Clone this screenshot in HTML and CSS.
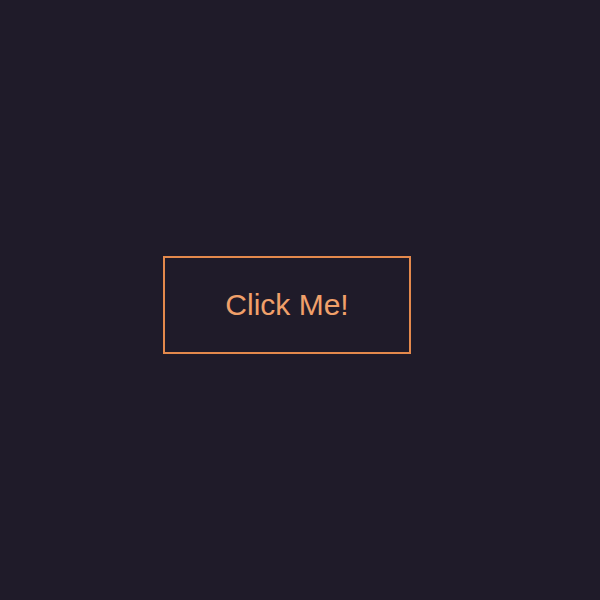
FILE: index.html
```html
<!DOCTYPE html>
<html>
<head>
<meta charset="utf-8">
<link rel="stylesheet" href="styles.css">
</head>
<body>
<main class="stage">
  <button class="btn">Click Me!</button>
</main>
</body>
</html>
```
FILE: styles.css
```css
html, body {
  margin: 0;
  padding: 0;
  background: #1f1b29;
}
.stage {
  width: 600px;
  height: 600px;
  box-sizing: border-box;
  display: flex;
  align-items: center;
  justify-content: center;
  padding: 10px 26px 0 0;
}
.btn {
  width: 248px;
  height: 98px;
  box-sizing: border-box;
  background: transparent;
  border: 2px solid #e3894c;
  color: #f0a06a;
  font-family: "Liberation Sans", Arial, sans-serif;
  font-size: 30px;
  padding: 0;
  cursor: pointer;
}
```
